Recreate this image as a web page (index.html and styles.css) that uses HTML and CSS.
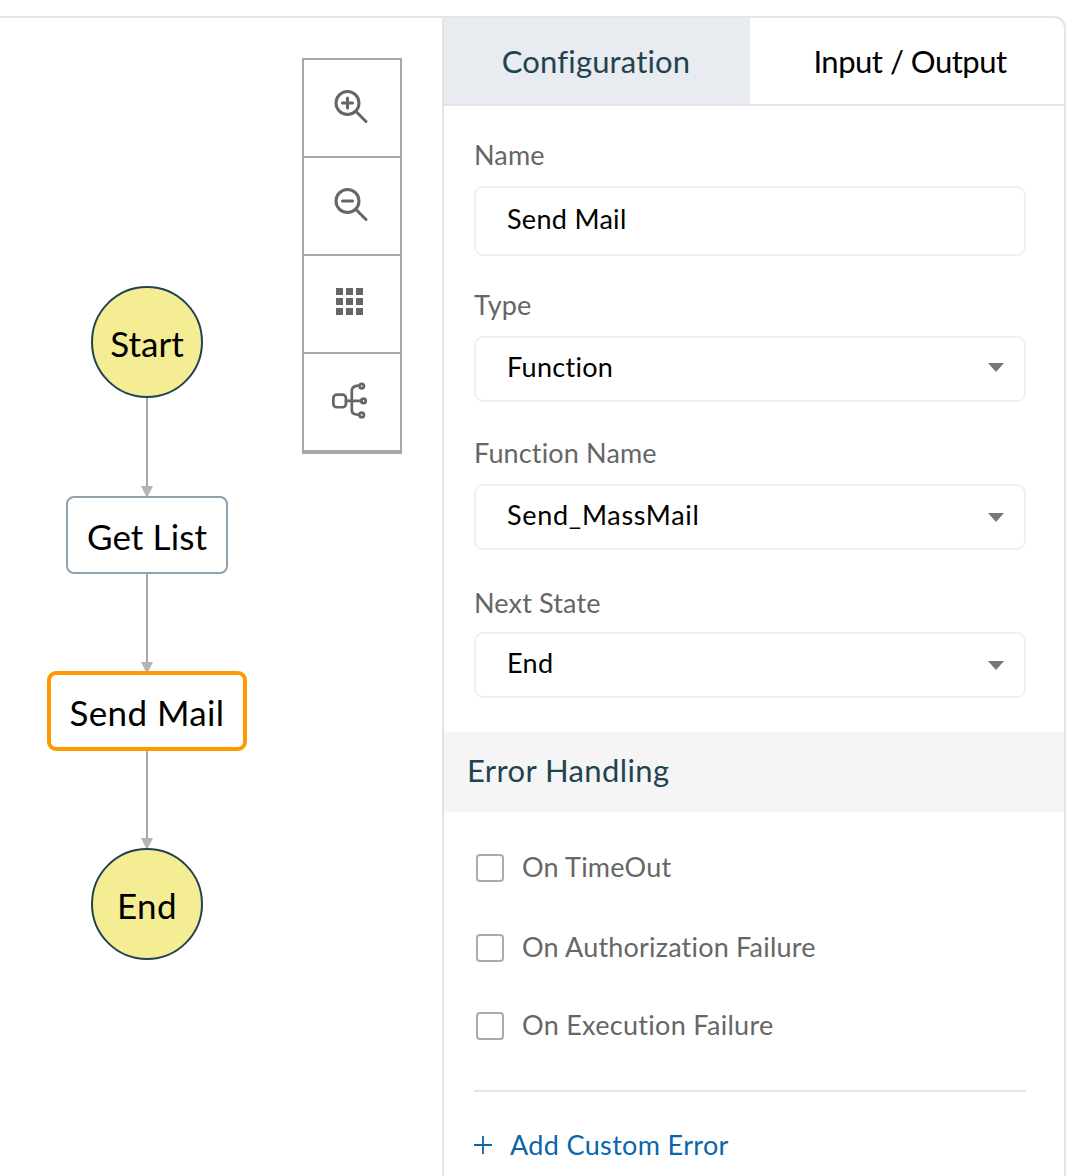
FILE: index.html
```html
<!DOCTYPE html>
<html lang="en">
<head>
<meta charset="utf-8">
<title>Send Mail state configuration</title>
<link rel="stylesheet" href="styles.css">
</head>
<body>
<main class="frame">
  <section class="canvas">
    <svg class="edges" width="442" height="1160" viewBox="0 0 442 1160" aria-hidden="true">
      <g class="edge">
        <line x1="147" y1="380" x2="147" y2="472"/>
        <line x1="147" y1="556" x2="147" y2="648"/>
        <line x1="147" y1="732" x2="147" y2="824"/>
      </g>
      <g class="arrow">
        <path d="M141 468h12l-6 12z"/>
        <path d="M141 644h12l-6 12z"/>
        <path d="M141 820h12l-6 12z"/>
      </g>
    </svg>
    <div class="node circle n-start">Start</div>
    <div class="node box n-list">Get List</div>
    <div class="node box active n-mail">Send Mail</div>
    <div class="node circle n-end">End</div>
    <div class="tools">
      <button class="tool" aria-label="Zoom in">
        <svg width="36" height="36" viewBox="0 0 36 36"><circle cx="15.5" cy="15" r="11.5"/><path d="M24 23.5l10 10M15.5 10v10M10.5 15h10"/></svg>
      </button>
      <button class="tool" aria-label="Zoom out">
        <svg width="36" height="36" viewBox="0 0 36 36"><circle cx="15.5" cy="15" r="11.5"/><path d="M24 23.5l10 10M10.5 15h10"/></svg>
      </button>
      <button class="tool" aria-label="Fit">
        <svg width="30" height="30" viewBox="0 0 30 30"><path class="solid" d="M1 1h7v7H1zM11 1h7v7h-7zM21 1h7v7h-7zM1 11h7v7H1zM11 11h7v7h-7zM21 11h7v7h-7zM1 21h7v7H1zM11 21h7v7h-7zM21 21h7v7h-7z"/></svg>
      </button>
      <button class="tool" aria-label="Layout">
        <svg width="36" height="35" viewBox="0 0 40 38"><rect x="1.500" y="12.500" width="14" height="14" rx="4"/><path d="M15.500 19.500H33M22 30c0-4 0-6 0-22 0-3 3-5 6.500-5.500M22 30c0 3 3 4.500 7 4.800"/><circle cx="33" cy="3" r="2.500"/><circle cx="35" cy="19.500" r="2.500"/><circle cx="33" cy="35" r="2.500"/></svg>
      </button>
    </div>
  </section>
  <section class="panel">
    <nav class="tabs">
      <div class="tab current">Configuration</div>
      <div class="tab other">Input / Output</div>
    </nav>
    <form class="form">
      <label class="label first">Name</label>
      <div class="field tall">Send Mail</div>
      <label class="label l-type">Type</label>
      <div class="field select type">Function<i class="caret"></i></div>
      <label class="label l-fn">Function Name</label>
      <div class="field select wide">Send_MassMail<i class="caret"></i></div>
      <label class="label l-next">Next State</label>
      <div class="field select">End<i class="caret"></i></div>
    </form>
    <h2 class="band">Error Handling</h2>
    <div class="checks">
      <div class="check c1"><span class="box-input"></span>On TimeOut</div>
      <div class="check c2"><span class="box-input"></span>On Authorization Failure</div>
      <div class="check c3"><span class="box-input"></span>On Execution Failure</div>
      <hr class="rule">
      <a class="add"><svg width="18" height="18" viewBox="0 0 18 18"><path d="M9 0v18M0 9h18"/></svg>Add Custom Error</a>
    </div>
  </section>
</main>
</body>
</html>
```

FILE: styles.css
```css
* { box-sizing: border-box; }
html, body { margin: 0; height: 100%; overflow: hidden; background: #fff; }
body { font-family: "Lato", "Liberation Sans", sans-serif; color: #000; padding-top: 16px; }

.frame {
  display: flex;
  width: 1066px;
  height: 1160px;
  border-top: 2px solid #e4e4e4;
  border-right: 2px solid #e4e4e4;
  border-top-right-radius: 12px;
  overflow: hidden;
}

.canvas { position: relative; width: 442px; flex: none; }
.edges { position: absolute; left: 0; top: 0; }
.edge line { stroke: #a8a8a8; stroke-width: 2; }
.arrow path { fill: #b4b4b4; }

.node {
  position: absolute;
  display: flex;
  align-items: center;
  justify-content: center;
  padding-top: 2px;
  font-size: 35px;
  letter-spacing: 0.4px;
  background: #fff;
}
.circle { width: 112px; height: 112px; left: 91px; border-radius: 50%; background: #f5ed93; border: 2px solid #1f4450; }
.box { height: 78px; border: 2px solid #8ea1ad; border-radius: 8px; }
.n-start { top: 268px; letter-spacing: 0; }
.n-list { top: 478px; left: 66px; width: 162px; letter-spacing: 0.1px; }
.n-mail { top: 653px; left: 47px; width: 200px; height: 80px; border: 4px solid #ff9900; border-radius: 9px; }
.n-end { top: 830px; }

.tools {
  position: absolute;
  left: 302px;
  top: 40px;
  width: 100px;
  display: flex;
  flex-direction: column;
  border: 2px solid #a8a8a8;
  border-bottom-width: 4px;
  background: #fff;
}
.tool {
  height: 98px;
  padding: 0 4px 5px 0;
  border: 0;
  border-bottom: 2px solid #a8a8a8;
  background: #fff;
  display: flex;
  align-items: center;
  justify-content: center;
}
.tool:last-child { border-bottom: 0; height: 96px; padding-bottom: 3px; }
.tool svg { fill: none; stroke: #666; stroke-width: 3; stroke-linecap: round; overflow: visible; }
.tool svg .solid { fill: #666; stroke: none; }

.panel { flex: 1; border-left: 2px solid #e4e4e4; min-width: 0; }
.tabs { display: flex; height: 88px; border-bottom: 2px solid #e4e4e4; }
.tab { display: flex; align-items: center; justify-content: center; font-size: 31px; flex: 1; }
.tab.current { flex: none; width: 306px; padding-right: 2px; letter-spacing: 0.15px; background: #e8ebef; color: #1f4450; }
.tab.other { padding-left: 6px; letter-spacing: -0.5px; }

.form { padding: 0 38px 0 30px; }
.label { display: block; font-size: 27px; line-height: 32px; letter-spacing: 0.15px; color: #666; }
.first { margin-top: 33px; margin-bottom: 15px; }
.l-type { margin-top: 33px; margin-bottom: 15px; }
.l-fn { margin-top: 35px; margin-bottom: 15px; }
.l-next { margin-top: 37px; margin-bottom: 13px; }
.field {
  position: relative;
  display: flex;
  align-items: center;
  height: 66px;
  padding: 0 0 6px 31px;
  border: 2px solid #f0f0f0;
  border-radius: 9px;
  font-size: 27px;
  letter-spacing: 0.3px;
}
.tall { height: 70px; }
.wide { letter-spacing: 0.7px; }
.caret {
  position: absolute;
  right: 20px;
  top: 27px;
  border-left: 8px solid transparent;
  border-right: 8px solid transparent;
  border-top: 9px solid #777;
}
.type .caret { top: 25px; }

.band {
  margin: 34px 0 0;
  height: 80px;
  padding: 0 0 4px 23px;
  display: flex;
  align-items: center;
  background: #f5f5f5;
  font-size: 31px;
  font-weight: 400;
  letter-spacing: 0.4px;
  color: #1f4450;
}

.checks { padding: 0 38px 0 30px; }
.check { display: flex; align-items: center; gap: 18px; font-size: 27px; letter-spacing: 0.2px; color: #666; height: 32px; padding-left: 2px; }
.box-input { width: 28px; height: 28px; margin-top: 4px; border: 2px solid #ababab; border-radius: 4px; background: #fff; flex: none; }
.c1 { margin-top: 38px; }
.c2 { margin-top: 48px; }
.c3 { margin-top: 46px; letter-spacing: 0.3px; }
.rule { margin: 50px 0 0; border: 0; border-top: 2px solid #e4e4e4; }
.add { display: flex; align-items: center; gap: 18px; margin-top: 37px; font-size: 27px; line-height: 32px; letter-spacing: 0.35px; color: #0a66ab; }
.add svg { fill: none; stroke: #0a66ab; stroke-width: 1.800; flex: none; }
```
